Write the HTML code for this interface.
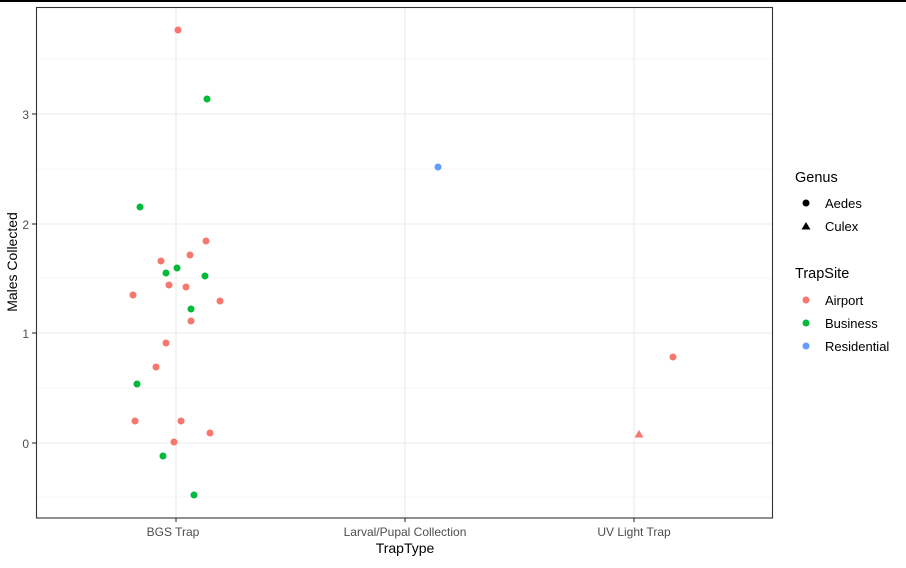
<!DOCTYPE html>
<html><head><style>body{margin:0;background:#fff}</style></head><body>
<svg width="906" height="563" xmlns="http://www.w3.org/2000/svg" font-family="Liberation Sans, sans-serif">
<rect width="906" height="563" fill="#fff"/>
<rect x="0" y="0" width="906" height="2" fill="#000"/>
<g stroke="#ebebeb" stroke-width="0.6">
<line x1="36" x2="773" y1="59" y2="59"/><line x1="36" x2="773" y1="169" y2="169"/><line x1="36" x2="773" y1="278" y2="278"/><line x1="36" x2="773" y1="388" y2="388"/><line x1="36" x2="773" y1="497" y2="497"/>
</g>
<g stroke="#ebebeb" stroke-width="1.1">
<line x1="36" x2="773" y1="114" y2="114"/><line x1="36" x2="773" y1="224" y2="224"/><line x1="36" x2="773" y1="333" y2="333"/><line x1="36" x2="773" y1="443" y2="443"/>
<line x1="176" x2="176" y1="7" y2="518"/><line x1="405" x2="405" y1="7" y2="518"/><line x1="634" x2="634" y1="7" y2="518"/>
</g>
<rect x="36.5" y="7.5" width="736" height="510.5" fill="none" stroke="#333" stroke-width="1.1"/>
<g stroke="#333" stroke-width="1.1">
<line x1="32" x2="36" y1="114" y2="114"/><line x1="32" x2="36" y1="224" y2="224"/><line x1="32" x2="36" y1="333" y2="333"/><line x1="32" x2="36" y1="443" y2="443"/>
<line x1="176" x2="176" y1="518" y2="522"/><line x1="405" x2="405" y1="518" y2="522"/><line x1="634" x2="634" y1="518" y2="522"/>
</g>
<g font-size="12" fill="#4d4d4d" text-anchor="end">
<text x="29" y="119">3</text><text x="29" y="229">2</text><text x="29" y="338">1</text><text x="29" y="448">0</text>
</g>
<g font-size="12" fill="#4d4d4d" text-anchor="middle">
<text x="173" y="536">BGS Trap</text><text x="405" y="536">Larval/Pupal Collection</text><text x="634" y="536">UV Light Trap</text>
</g>
<text x="405" y="553" font-size="14" text-anchor="middle" fill="#000">TrapType</text>
<text transform="translate(17,262) rotate(-90)" font-size="14" text-anchor="middle" fill="#000">Males Collected</text>
<g fill="#F8766D">
<circle cx="178" cy="30" r="3.5"/><circle cx="206" cy="241" r="3.5"/><circle cx="161" cy="261" r="3.5"/><circle cx="190" cy="255" r="3.5"/><circle cx="169" cy="285" r="3.5"/><circle cx="186" cy="287" r="3.5"/><circle cx="133" cy="295" r="3.5"/><circle cx="220" cy="301" r="3.5"/><circle cx="191" cy="321" r="3.5"/><circle cx="166" cy="343" r="3.5"/><circle cx="156" cy="367" r="3.5"/><circle cx="135" cy="421" r="3.5"/><circle cx="181" cy="421" r="3.5"/><circle cx="210" cy="433" r="3.5"/><circle cx="174" cy="442" r="3.5"/><circle cx="673" cy="357" r="3.5"/>
<polygon points="639,430 643.5,437.5 634.5,437.5"/>
</g>
<g fill="#00BA38">
<circle cx="207" cy="99" r="3.5"/><circle cx="140" cy="207" r="3.5"/><circle cx="177" cy="268" r="3.5"/><circle cx="166" cy="273" r="3.5"/><circle cx="205" cy="276" r="3.5"/><circle cx="191" cy="309" r="3.5"/><circle cx="137" cy="384" r="3.5"/><circle cx="163" cy="456" r="3.5"/><circle cx="194" cy="495" r="3.5"/>
</g>
<circle cx="438" cy="167" r="3.5" fill="#619CFF"/>
<text x="795" y="182" font-size="14.5" fill="#000">Genus</text>
<circle cx="806" cy="203" r="3.5" fill="#000"/>
<polygon points="806,222 810.5,229.5 801.5,229.5" fill="#000"/>
<text x="825" y="208" font-size="13" fill="#000">Aedes</text>
<text x="825" y="231" font-size="13" fill="#000">Culex</text>
<text x="795" y="278" font-size="14.5" fill="#000">TrapSite</text>
<circle cx="806" cy="300" r="3.5" fill="#F8766D"/><circle cx="806" cy="323" r="3.5" fill="#00BA38"/><circle cx="806" cy="346" r="3.5" fill="#619CFF"/>
<text x="825" y="305" font-size="13" fill="#000">Airport</text>
<text x="825" y="328" font-size="13" fill="#000">Business</text>
<text x="825" y="351" font-size="13" fill="#000">Residential</text>
</svg>
</body></html>
